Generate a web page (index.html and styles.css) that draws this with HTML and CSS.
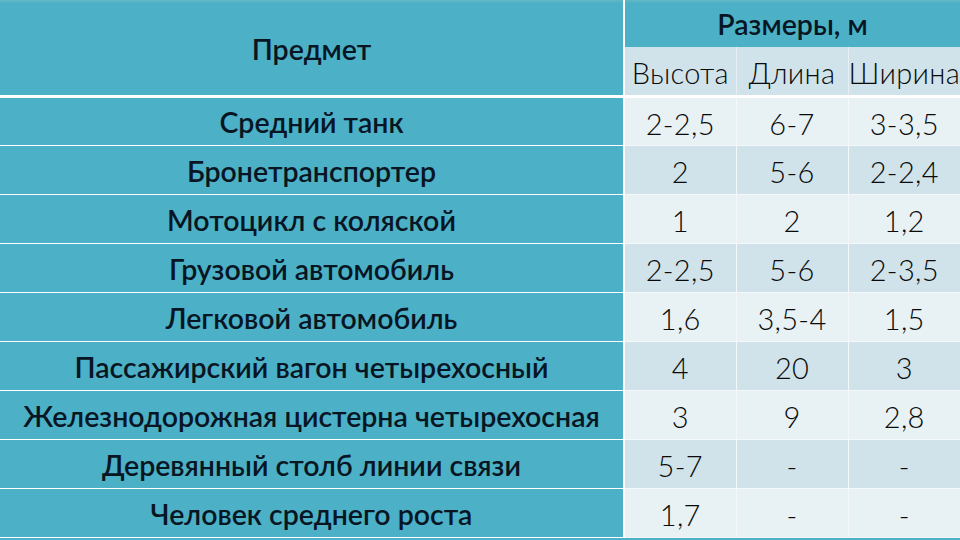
FILE: index.html
```html
<!DOCTYPE html>
<html lang="ru">
<head>
<meta charset="utf-8">
<link rel="stylesheet" href="styles.css">
</head>
<body>
<table class="sizes">
  <colgroup>
    <col class="c-name"><col class="c-num"><col class="c-num"><col class="c-num">
  </colgroup>
  <thead>
    <tr class="h1">
      <th class="name-head" rowspan="2">Предмет</th>
      <th class="group-head" colspan="3">Размеры, м</th>
    </tr>
    <tr class="h2">
      <th class="sub">Высота</th><th class="sub">Длина</th><th class="sub">Ширина</th>
    </tr>
  </thead>
  <tbody>
    <tr class="odd"><td class="name">Средний танк</td><td>2-2,5</td><td>6-7</td><td>3-3,5</td></tr>
    <tr class="even"><td class="name">Бронетранспортер</td><td>2</td><td>5-6</td><td>2-2,4</td></tr>
    <tr class="odd"><td class="name">Мотоцикл с коляской</td><td>1</td><td>2</td><td>1,2</td></tr>
    <tr class="even"><td class="name">Грузовой автомобиль</td><td>2-2,5</td><td>5-6</td><td>2-3,5</td></tr>
    <tr class="odd"><td class="name">Легковой автомобиль</td><td>1,6</td><td>3,5-4</td><td>1,5</td></tr>
    <tr class="even"><td class="name">Пассажирский вагон четырехосный</td><td>4</td><td>20</td><td>3</td></tr>
    <tr class="odd"><td class="name">Железнодорожная цистерна четырехосная</td><td>3</td><td>9</td><td>2,8</td></tr>
    <tr class="even"><td class="name">Деревянный столб линии связи</td><td>5-7</td><td>-</td><td>-</td></tr>
    <tr class="odd"><td class="name">Человек среднего роста</td><td>1,7</td><td>-</td><td>-</td></tr>
  </tbody>
</table>
</body>
</html>
```
FILE: styles.css
```css
html, body {
  margin: 0;
  padding: 0;
  background: #4cb0c6;
  width: 960px;
  height: 540px;
  overflow: hidden;
}

.sizes {
  width: 960px;
  border-collapse: collapse;
  table-layout: fixed;
  font-family: Lato, "Liberation Sans", sans-serif;
  color: #0a0a0a;
  border-top: 2px solid #5fb6c5;
}

.c-name { width: 624px; }
.c-num { width: 112px; }

th, td {
  padding: 0;
  text-align: center;
  vertical-align: middle;
  line-height: 1;
}

.name-head, .group-head, .name {
  background: #4cb0c6;
  font-weight: 600;
  font-size: 28.5px;
  color: #081624;
}

.group-head {
  font-size: 28.5px;
}

.name-head {
  border-right: 2px solid #ffffff;
  border-bottom: 3px solid #ffffff;
  padding-top: 1px;
}

.h1 { height: 46px; }
.h2 { height: 49px; }

.sub {
  background: #d0e3ea;
  font-weight: 300;
  font-size: 29px;
  letter-spacing: 0.3px;
  border-bottom: 3px solid #ffffff;
  border-left: 1px solid #e6f0f3;
  padding-top: 4px;
}

tbody tr { height: 49px; }

tbody td {
  font-size: 29px;
  font-weight: 300;
  letter-spacing: 0.3px;
  padding-top: 4px;
  border-left: 1px solid #f4f8fa;
  border-bottom: 1px solid #f4f8fa;
}

tbody td.name {
  border-left: none;
  border-right: 2px solid #ffffff;
  border-bottom: 1px solid #ffffff;
  letter-spacing: 0;
  padding-top: 3px;
}

.odd td { background: #e8f1f4; }
.even td { background: #d0e3ea; }
.odd td.name, .even td.name { background: #4cb0c6; }
```
